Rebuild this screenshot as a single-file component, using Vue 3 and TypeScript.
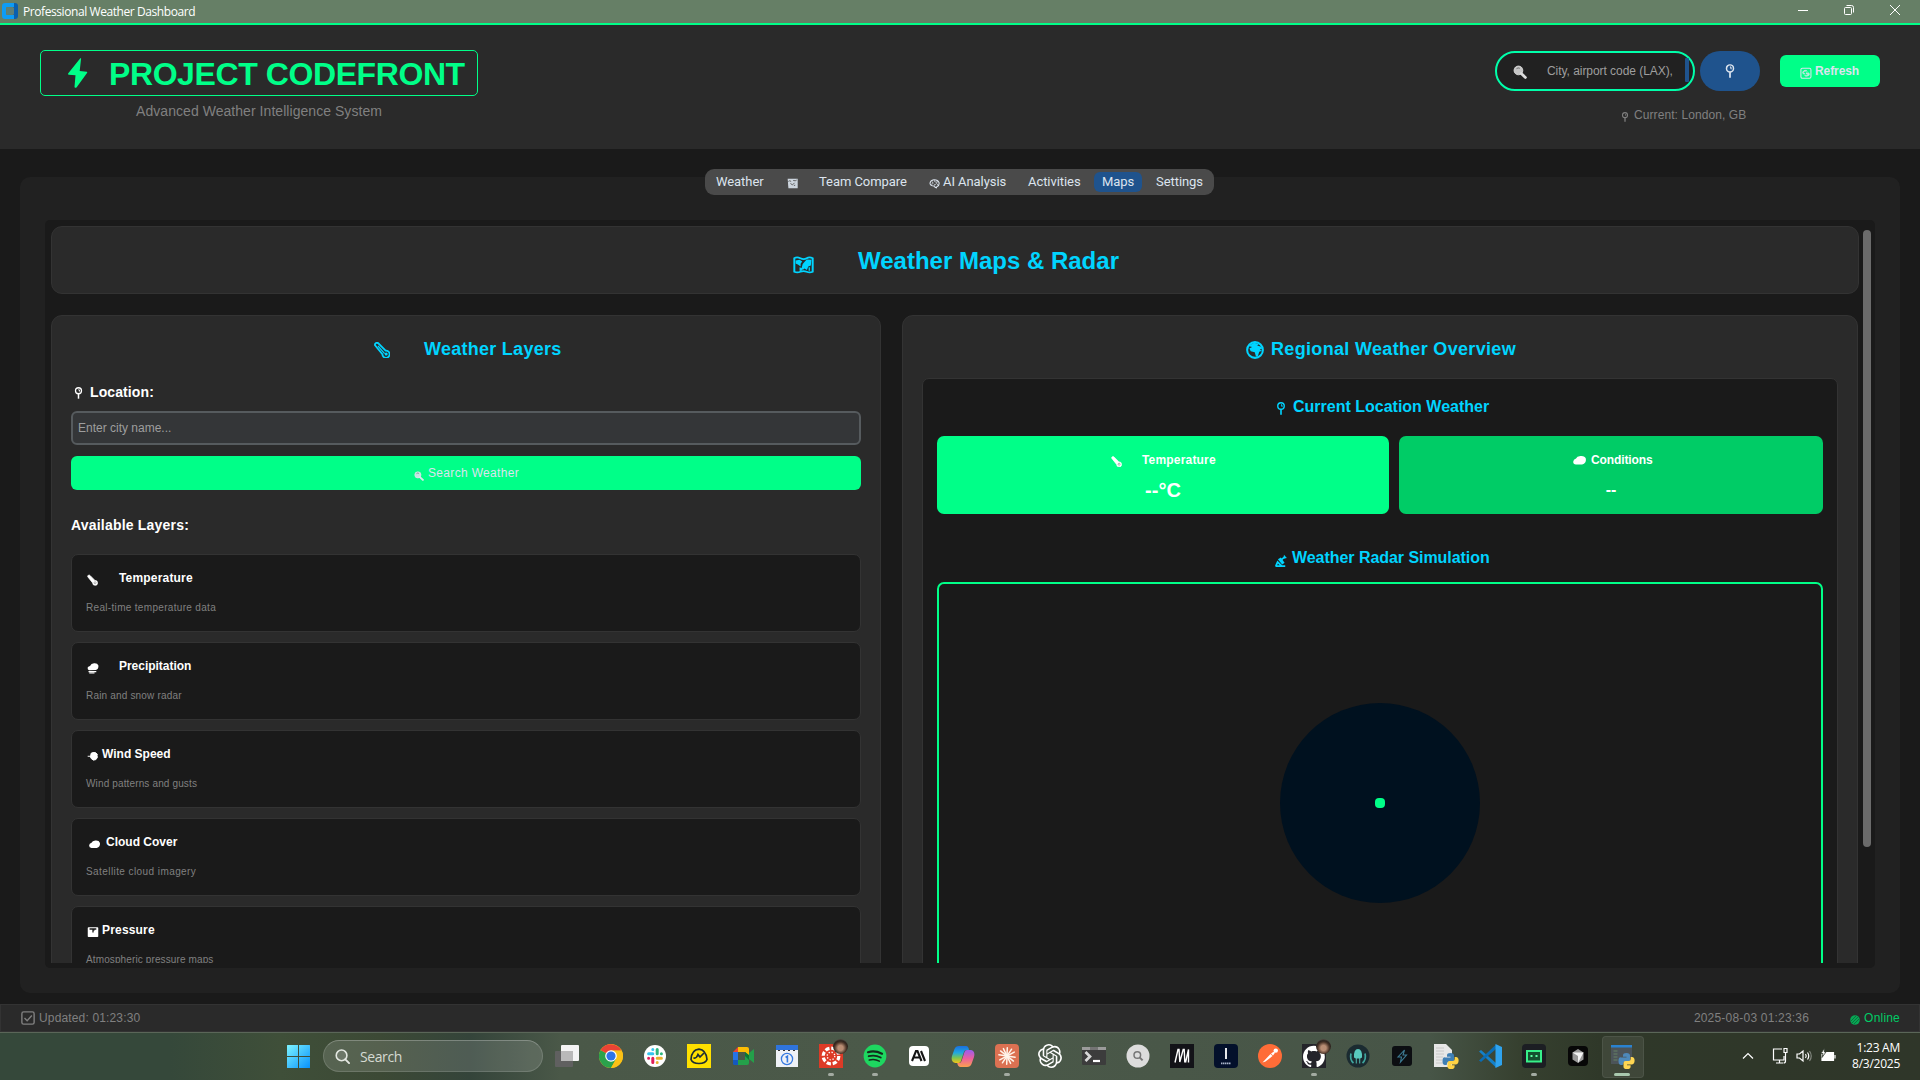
<script setup lang="ts">
interface Layer {
  name: string
  info: string
  icon: string
  w: number
  gap: number
  tracking: number
  infoTracking: number
}

interface TaskApp {
  name: string
  art: string
  running?: boolean
  badge?: boolean
  active?: boolean
}

const glyph: Record<string, string> = {
  pin: '<circle cx="8" cy="5" r="4" fill="none" stroke="currentColor" stroke-width="1.7"/><path d="M8 3.200A2 2 0 0 1 9 6" fill="none" stroke="currentColor" stroke-width="1.400"/><path d="M8 9v6.600" stroke="currentColor" stroke-width="2"/>',
  thermo: '<path d="M1 3.200A2 2 0 0 1 4.400 1.400l7.200 7.200a3.600 3.600 0 1 1-3.200 3.600z" fill="none" stroke="currentColor" stroke-width="1.800" stroke-linejoin="round"/><path d="M4 4l6.600 7.600" stroke="currentColor" stroke-width="1.200"/><circle cx="12.200" cy="12" r="1.500" fill="currentColor"/>',
  thermoSolid: '<path d="M1 3.200A2 2 0 0 1 4.400 1.400l7.200 7.200a3.600 3.600 0 1 1-3.400 3.600z" fill="currentColor" stroke="currentColor"/><circle cx="11.800" cy="12" r="1.500" fill="none" stroke="#0006"/>',
  map: '<path d="M1 2q2-1.400 4.600 0t4.800 0T15 2v12q-2.200 1.200-4.600 0t-4.800 0T1 14z" fill="none" stroke="currentColor" stroke-width="1.500"/><path d="M2 4l3-.600 2 1.400-1.200 2L5.800 9.400 4 7.800 2 6.600zM7.400 7l3-4 3.600.4-.4 5-2 1-1 3-1.800-1.400-1.400 1.400-.8-2zM5 10l2.400 1-1 2.400-1.400-.4z" fill="currentColor"/><path d="M12.400 10v3" stroke="currentColor"/>',
  globe: '<circle cx="8" cy="8" r="7" fill="none" stroke="currentColor" stroke-width="1.800"/><path d="M2 4.400L7.200 1.600l4 1L10 4l3.400 1.200.8 1.600-2 .8 2 1-2.400 1-1.400 4.200H8.800l-1-3.800-3.600-1L3 6.600l2.400-1.200z" fill="currentColor"/>',
  cloud: '<path d="M4 13.200Q.8 13 .8 10 1 7.200 4 6.400 5 3.800 9 3.400q5-.6 6.300 3.200.6 5.400-4.300 6.600z" fill="currentColor"/>',
  rain: '<path d="M3 11Q.6 10.600.8 7.800 1 5.600 4 5.200 5.400 2.400 9.400 1.800q4.600-.4 5.800 2.800.6 4.600-3.600 6.200z" fill="currentColor"/><path d="M2 12.800h10.400M3 14.600h7" stroke="currentColor" stroke-width="1.500"/>',
  wind: '<path d="M1 8.400h4M6 4l2.600-1 3.600 0L15 5.400l-.4 2.400.6 2-2.200 3.400-3.600.8L6.400 12 5 9.400z" fill="currentColor" stroke="currentColor" stroke-width="1.400"/>',
  gauge: '<rect x="1" y="1.500" width="14" height="13" rx="1" fill="currentColor"/><path d="M3.400 4h9M8 4v4.600M8 6l2-1" stroke="#1a1a1a" stroke-width="1.700" fill="none"/>',
  dish: '<path d="M3.600 6.400l3.600-2 4.600 6.400-3 2z" fill="currentColor"/><path d="M1 15l2.200-5 5.200 5M.6 15h12M8 7l4-3.400" stroke="currentColor" stroke-width="2.200" fill="none"/><path d="M11 1l3.600 4-4 .8z" fill="currentColor"/>',
  lens: '<circle cx="6.200" cy="6.200" r="5" fill="currentColor" fill-opacity=".88" stroke="currentColor"/><path d="M4 4.200a3.200 3.200 0 0 1 3.800-.4" stroke="#555" stroke-width=".9" fill="none"/><path d="M9.400 9.800l4.800 4.400" stroke="currentColor" stroke-width="3.200" stroke-linecap="round"/>',
  chart: '<path d="M1 1h14.500v14H2z" fill="currentColor" opacity=".9"/><path d="M2 5q2-2 4 0M9 3.600l3 .4 2-1M5 8l3 2 3-3M10 11l2-.6" stroke="#4a4a4a" stroke-width="1.200" fill="none"/>',
  brain: '<path d="M1.400 7.600Q2 3.400 7 2.600q6-.2 7.600 4.200.8 4.600-3.200 5.800l-.6 1.600-2-.6-.6-1.800Q1.800 11.600 1.400 7.600z" fill="none" stroke="currentColor" stroke-width="1.500"/><path d="M4 5.400q2.400.6 1.600 2.400T3.400 9M8 3.400q-.6 2 1.600 2.400t1 2.400-3 1.400M11 5l2.400 1M11.600 9.600l1.600-.8" fill="none" stroke="currentColor" stroke-width="1.200"/>',
  refresh: '<rect x="1.200" y="1.600" width="13.400" height="13.400" rx="2" fill="none" stroke="currentColor" stroke-width="1.400"/><path d="M3.600 7.400q1-3.400 4.600-3l1.600 1.400M12.400 9.200q-1 3.400-4.600 3l-2-1.400M4 6v3h3M12 11V8H8z" fill="currentColor" fill-opacity=".6" stroke="currentColor"/>',
  check: '<rect x="1" y="1" width="14" height="14" rx="2" fill="none" stroke="currentColor" stroke-width="1.600"/><path d="M4 8l3 3 5.400-5.800" fill="none" stroke="currentColor" stroke-width="1.600"/>',
}

const layers: Layer[] = [
  { name: 'Temperature', info: 'Real-time temperature data', icon: 'thermoSolid', w: 11, gap: 21, tracking: 0.18, infoTracking: 0.32 },
  { name: 'Precipitation', info: 'Rain and snow radar', icon: 'rain', w: 12, gap: 20, tracking: -0.03, infoTracking: 0.18 },
  { name: 'Wind Speed', info: 'Wind patterns and gusts', icon: 'wind', w: 11, gap: 4, tracking: 0, infoTracking: 0.14 },
  { name: 'Cloud Cover', info: 'Satellite cloud imagery', icon: 'cloud', w: 15, gap: 4, tracking: 0, infoTracking: 0.42 },
  { name: 'Pressure', info: 'Atmospheric pressure maps', icon: 'gauge', w: 12, gap: 3, tracking: 0.18, infoTracking: 0.12 },
]

const python =
  '<path d="M16.500 9q3.500 0 3.500 2.500V16q0 2-2 2h-3q-2.200 0-2.200 2.200V21H11q-2.500 0-2.500-4t2.500-3.600h5.500v-.7H13v-1.500Q13 9 16.500 9z" fill="#3f7fb5"/><path d="M17 25q-3.500 0-3.500-2.300V19q0-2 2-2h3.200q2 0 2-2v-2H22q2.600 0 2.600 3.600T22 20.600h-5v.7h3.600v1.400Q20.600 25 17 25z" fill="#ffd344"/>'

const apps: TaskApp[] = [
  { name: 'Task View', art: '<rect x="0" y="7" width="18" height="16" rx="1" fill="#606060"/><rect x="6" y="1" width="18" height="16" rx="1" fill="#f4f4f4"/><rect x="6" y="7" width="12" height="10" fill="#b9b9b9"/>' },
  { name: 'Chrome', art: '<circle cx="12" cy="12" r="12" fill="#fbc116"/><path d="M12 12L1.600 6A12 12 0 0 0 12 24l5-9z" fill="#2ba24c"/><path d="M12 12L1.600 6A12 12 0 0 1 22.400 6.500H12z" fill="#ea4335"/><path d="M12 12L17.200 15 12 24A12 12 0 0 0 22.800 6.700H12z" fill="#fbc116"/><circle cx="12" cy="12" r="5.800" fill="#fff"/><circle cx="12" cy="12" r="4.600" fill="#2f74e8"/>' },
  { name: 'Slack', art: '<circle cx="12" cy="12" r="11" fill="#fff"/><g stroke-width="3" stroke-linecap="round"><path d="M9.800 9.800H5.600M9.800 5.600h0" stroke="#36c5f0"/><path d="M14.200 9.800V5.600M18.400 9.800h0" stroke="#2eb67d"/><path d="M9.800 14.200v4.200M5.600 14.200h0" stroke="#e01e5a"/><path d="M14.200 14.200h4.200M14.200 18.400h0" stroke="#ecb22e"/></g>' },
  { name: 'Basecamp', art: '<rect width="24" height="24" fill="#ffe000"/><path d="M7 14q2.500.5 4-3.500l2 2.500 3.500-3.500" fill="none" stroke="#1d2d35" stroke-width="1.700" stroke-linecap="round"/><path d="M4 15.500Q4.500 6 12 5.200q7 .8 8 10.300-1.500 4-8 4t-8-4z" fill="none" stroke="#1d2d35" stroke-width="1.700"/>' },
  { name: 'Meet', art: '<path d="M2 8l5-5v5z" fill="#ea4335"/><path d="M7 3h9q2 0 2 2v7l-4-4H7z" fill="#fbbc04"/><path d="M2 8h5v8H2z" fill="#2673e8"/><path d="M2 16h5v5H3.500Q2 21 2 19.500z" fill="#1558c0"/><path d="M7 16h7v-4h4v7q0 2-2 2H7zM18 9l5-4v14l-5-4z" fill="#24a04a"/><path d="M14 8l4 3v5l-4-4z" fill="#0b7735"/>' },
  { name: 'Calendar', art: '<rect x="1" y="3" width="22" height="20" fill="#eef1f6"/><path d="M1 1h22v5H1z" fill="#2f74dc"/><path d="M3 6.500h18" stroke="#333" stroke-width="1" stroke-dasharray="2 3"/><circle cx="12" cy="15" r="5.600" fill="none" stroke="#367ae0" stroke-width="1.300"/><path d="M10.600 13.500l1.800-1.300V18.500" fill="none" stroke="#367ae0" stroke-width="1.600"/>' },
  { name: 'Canvas', art: '<rect width="24" height="24" fill="#dd3b27"/><circle cx="12" cy="12" r="7.800" fill="none" stroke="#fff" stroke-width="3.200" stroke-dasharray="4.300 1.830"/><circle cx="12" cy="12" r="3.800" fill="none" stroke="#fff" stroke-width="1.300" stroke-dasharray="1.300 1.700"/>', running: true, badge: true },
  { name: 'Spotify', art: '<circle cx="12" cy="12" r="11.400" fill="#1ed760"/><g fill="none" stroke="#142a1b" stroke-linecap="round"><path d="M5 8.200q7-2 14 1.500" stroke-width="2.200"/><path d="M5.700 12.200q6.300-1.700 12 1.300" stroke-width="1.900"/><path d="M6.300 16q5.400-1.400 10 1.100" stroke-width="1.600"/></g>', running: true },
  { name: 'Anthropic', art: '<rect x="2" y="2" width="20" height="20" rx="4" fill="#fff"/><path d="M5 17l4-10h1.500l4 10M6.500 13.500h6M14 7l4 10" fill="none" stroke="#151515" stroke-width="2.100"/>' },
  { name: 'Copilot', art: '<defs><linearGradient id="cpa" x1="0" y1="0" x2="0" y2="1"><stop offset="0" stop-color="#1a6fe0"/><stop offset=".4" stop-color="#20a8e0"/><stop offset=".7" stop-color="#7cc450"/><stop offset="1" stop-color="#f5c518"/></linearGradient><linearGradient id="cpb" x1="0" y1="0" x2="0" y2="1"><stop offset="0" stop-color="#9a5cf0"/><stop offset=".5" stop-color="#ec5f9e"/><stop offset="1" stop-color="#fba04e"/></linearGradient></defs><path d="M8 2h7q2.500 0 3 4h-2.500q-2 0-2.600 2L10 17q-.6 2-2.500 2H4.500Q-.5 18 1 12L3.500 5Q4.600 2 8 2z" fill="url(#cpa)"/><path d="M16 23H9.500Q7 23 6.200 19H8q2 0 2.600-2L13.500 8q.6-2 2.500-2h4Q24.500 7 23 13l-2.500 7q-1.100 3-4.500 3z" fill="url(#cpb)"/>' },
  { name: 'Claude', art: '<rect width="24" height="24" rx="4" fill="#dc7152"/><g stroke="#fff4ea" stroke-width="1.500" stroke-linecap="round">' + [8, 38, 64, 92, 124, 152].map((a) => `<path d="M3.800 12h16.400" transform="rotate(${a} 12 12)"/>`).join('') + '</g>', running: true },
  { name: 'ChatGPT', art: '<path fill="#fff" d="M22.2819 9.8211a5.9847 5.9847 0 0 0-.5157-4.9108 6.0462 6.0462 0 0 0-6.5098-2.9A6.0651 6.0651 0 0 0 4.9807 4.1818a5.9847 5.9847 0 0 0-3.9977 2.9 6.0462 6.0462 0 0 0 .7427 7.0966 5.98 5.98 0 0 0 .511 4.9107 6.051 6.051 0 0 0 6.5146 2.9001A5.9847 5.9847 0 0 0 13.2599 24a6.0557 6.0557 0 0 0 5.7718-4.2058 5.9894 5.9894 0 0 0 3.9977-2.9001 6.0557 6.0557 0 0 0-.7475-7.0729zm-9.022 12.6081a4.4755 4.4755 0 0 1-2.8764-1.0408l.1419-.0804 4.7783-2.7582a.7948.7948 0 0 0 .3927-.6813v-6.7369l2.02 1.1686a.071.071 0 0 1 .038.052v5.5826a4.504 4.504 0 0 1-4.4945 4.4944zm-9.6607-4.1254a4.4708 4.4708 0 0 1-.5346-3.0137l.142.0852 4.783 2.7582a.7712.7712 0 0 0 .7806 0l5.8428-3.3685v2.3324a.0804.0804 0 0 1-.0332.0615L9.74 19.9502a4.4992 4.4992 0 0 1-6.1408-1.6464zM2.3408 7.8956a4.485 4.485 0 0 1 2.3655-1.9728V11.6a.7664.7664 0 0 0 .3879.6765l5.8144 3.3543-2.0201 1.1685a.0757.0757 0 0 1-.071 0l-4.8303-2.7865A4.504 4.504 0 0 1 2.3408 7.872zm16.5963 3.8558L13.1038 8.364 15.1192 7.2a.0757.0757 0 0 1 .071 0l4.8303 2.7913a4.4944 4.4944 0 0 1-.6765 8.1042v-5.6772a.79.79 0 0 0-.407-.667zm2.0107-3.0231l-.142-.0852-4.7735-2.7818a.7759.7759 0 0 0-.7854 0L9.409 9.2297V6.8974a.0662.0662 0 0 1 .0284-.0615l4.8303-2.7866a4.4992 4.4992 0 0 1 6.6802 4.66zM8.3065 12.863l-2.02-1.1638a.0804.0804 0 0 1-.038-.0567V6.0742a4.4992 4.4992 0 0 1 7.3757-3.4537l-.142.0805L8.704 5.459a.7948.7948 0 0 0-.3927.6813zm1.0976-2.3654l2.602-1.4998 2.6069 1.4998v2.9994l-2.5974 1.4997-2.6067-1.4997Z"/>' },
  { name: 'Terminal', art: '<rect y="3" width="24" height="18" rx="1" fill="#3c3c3c"/><path d="M0 3h24v3H0z" fill="#9b9b9b"/><path d="M8 3h8v3H8z" fill="#747474"/><path d="M3.500 8l4.500 4.500L3.500 17" fill="none" stroke="#d8d8d8" stroke-width="2.700"/><path d="M11 17h7" stroke="#fff" stroke-width="2.200"/>' },
  { name: 'Finder', art: '<circle cx="12" cy="12" r="11.500" fill="#dcdcdc"/><circle cx="11.300" cy="11" r="3.300" fill="none" stroke="#777" stroke-width="1.500"/><path d="M13.600 13.400l3 3" stroke="#777" stroke-width="2"/>' },
  { name: 'Monitor', art: '<rect width="24" height="24" fill="#131318"/><path d="M5 18.500L8 5.500h1l.8 12.500L13.200 5.500h1L14.800 18.500M15.500 18.500L18.500 5.500V18.500" fill="none" stroke="#fff" stroke-width="1.400"/>' },
  { name: 'Ionos', art: '<rect width="24" height="24" rx="4" fill="#03102b"/><path d="M12 4v11" stroke="#fff" stroke-width="1.800"/><path d="M7 19.400h10" stroke="#a9b4ca" stroke-width="1.800" stroke-dasharray="1.500 .5"/>' },
  { name: 'Postman', art: '<circle cx="12" cy="12" r="12" fill="#ff6c37"/><path d="M4.500 18.500l8-8.500 2 2-7 5.500zM13 9.500l3-2 1 1.200-2 2.800z" fill="#fff"/><circle cx="17.800" cy="6.600" r="2.200" fill="#fff"/>' },
  { name: 'GitHub', art: '<rect width="24" height="24" fill="#24242a"/><path transform="translate(1 1.500) scale(.91)" d="M12 .297c-6.630 0-12 5.373-12 12 0 5.303 3.438 9.800 8.205 11.385.600.113.820-.258.820-.577 0-.285-.010-1.040-.015-2.040-3.338.724-4.042-1.610-4.042-1.610C4.422 18.070 3.633 17.700 3.633 17.700c-1.087-.744.084-.729.084-.729 1.205.084 1.838 1.236 1.838 1.236 1.070 1.835 2.809 1.305 3.495.998.108-.776.417-1.305.760-1.605-2.665-.300-5.466-1.332-5.466-5.930 0-1.310.465-2.380 1.235-3.220-.135-.303-.540-1.523.105-3.176 0 0 1.005-.322 3.300 1.230.960-.267 1.980-.399 3-.405 1.020.006 2.040.138 3 .405 2.280-1.552 3.285-1.230 3.285-1.230.645 1.653.240 2.873.120 3.176.765.840 1.230 1.910 1.230 3.220 0 4.610-2.805 5.625-5.475 5.920.420.360.810 1.096.810 2.220 0 1.606-.015 2.896-.015 3.286 0 .315.210.690.825.570C20.565 22.092 24 17.592 24 12.297c0-6.627-5.373-12-12-12" fill="#fff"/>', running: true, badge: true },
  { name: 'GitKraken', art: '<circle cx="12" cy="12" r="11.500" fill="#1b2b31"/><path d="M8 13.500Q7.500 5 12 5t4 8.500l-1.800 1v5h-.9v-5h-2.600v5h-.9v-5z" fill="#58c9be"/><path d="M7.500 19Q3.500 15.500 5 9.500M16.500 19q4-3.500 2.500-9.500" fill="none" stroke="#3fa59e" stroke-width="1.700"/>' },
  { name: 'Bolt', art: '<rect x="2" y="2" width="20" height="20" rx="3" fill="#0c0e12"/><path d="M14.500 6L8 13h3.500l-1 5 6-7H13z" fill="none" stroke="#3d7b94" stroke-width="1.100"/>' },
  { name: 'Python Script', art: '<path d="M0 0h12l6 6v17H0z" fill="#e7e7e7"/><path d="M2 4h8M2 7h8M2 10h8M2 13h7M2 16h6M2 19h7" stroke="#c2c2c2" stroke-width=".8"/>' + python },
  { name: 'VS Code', art: '<path d="M1 7.500L3 6l15 13v4.500z" fill="#1480c8"/><path d="M1 16.500L3 18 18 5V.5z" fill="#0a6cb4"/><path d="M17.500 0L24 3v18l-6.500 3z" fill="#2fa3ee"/>' },
  { name: 'Recorder', art: '<rect x="0" y="0" width="24" height="24" rx="4" fill="#1c1e23"/><path d="M5 7h14v10.500H5z" fill="#14502f" stroke="#37f08a" stroke-width="2"/><path d="M8.500 12h2M13.500 12h2" stroke="#5cffa4" stroke-width="2"/>', running: true },
  { name: 'Cursor', art: '<rect x="2" y="2" width="20" height="20" rx="4" fill="#070707"/><path d="M6.500 8.500L12 5l5.500 3.500v7L12 19l-5.500-3.500z" fill="#9a9a9a"/><path d="M6.500 8.500h11L12 19v-7z" fill="#f4f4f4"/>' },
  { name: 'Weather Dashboard', art: '<rect x="1" y="1" width="21" height="19" fill="#3d464b"/><path d="M1 1h21v2.500H1z" fill="#1878cc"/><path d="M3.500 7h4M3.500 10h4M3.500 13h4M3.500 16h4" stroke="#62855c" stroke-width=".8"/>' + python, active: true },
]
</script>

<template>
  <div class="screen">
    <div class="titlebar">
      <svg class="appicon" viewBox="0 0 16 16"><path d="M11 0h2q3 0 3 3v10q0 3-3 3h-2z" fill="#0a5fae" /><path d="M3 0h9v4H5q-1 0-1 1v6q0 1 1 1h7v4H3q-3 0-3-3V3q0-3 3-3z" fill="#0d9cf5" /><path d="M4.500 4.500H12v7H4.500z" fill="#5d8079" /></svg>
      <span class="wintitle">Professional Weather Dashboard</span>
      <div class="wincontrols">
        <svg viewBox="0 0 12 12"><path d="M1 6.500h10" /></svg>
        <svg viewBox="0 0 12 12"><rect x="1.500" y="3.500" width="7" height="7" rx="1" /><path d="M3.500 1.500h5q2 0 2 2v5" /></svg>
        <svg viewBox="0 0 12 12"><path d="M1 1l10 10M11 1L1 11" /></svg>
      </div>
    </div>

    <header class="header">
      <div class="brand">
        <div class="logo">
          <svg class="bolt" viewBox="0 0 20 30"><path d="M12.300.3Q13.500-.3 13 1.300L11.700 13l7 .7q1 .3.300 1.300L8.500 29.500q-2 1-2-.7l1-11.500-6.700-.6q-1.200-.4-.5-1.400z" fill="currentColor" /></svg>
          <span>PROJECT CODEFRONT</span>
        </div>
        <div class="tagline">Advanced Weather Intelligence System</div>
      </div>
      <div class="tools">
        <div class="toolrow">
          <div class="search">
            <svg class="lens" viewBox="0 0 16 16" v-html="glyph.lens" />
            <span>City, airport code (LAX),</span>
            <i />
          </div>
          <button class="locate"><svg viewBox="0 0 16 16" v-html="glyph.pin" /></button>
          <button class="refresh"><svg viewBox="0 0 16 16" v-html="glyph.refresh" />Refresh</button>
        </div>
        <div class="current"><svg viewBox="0 0 16 16" v-html="glyph.pin" />Current: London, GB</div>
      </div>
    </header>

    <main class="main">
      <nav class="tabs">
        <span class="tab t1">Weather</span>
        <span class="tab t2"><svg viewBox="0 0 16 16" v-html="glyph.chart" />Team Compare</span>
        <span class="tab t3"><svg viewBox="0 0 16 16" v-html="glyph.brain" />AI Analysis</span>
        <span class="tab t4">Activities</span>
        <span class="tab on">Maps</span>
        <span class="tab t6">Settings</span>
      </nav>
      <section class="panel">
        <div class="scroller">
          <div class="view">
            <div class="card heading">
              <svg viewBox="0 0 16 16" preserveAspectRatio="none" v-html="glyph.map" />
              <h1>Weather Maps &amp; Radar</h1>
            </div>
            <div class="columns">
              <div class="card left">
                <div class="subhead lh"><svg viewBox="0 0 16 16" v-html="glyph.thermo" /><h2>Weather Layers</h2></div>
                <div class="label"><svg viewBox="0 0 16 16" v-html="glyph.pin" />Location:</div>
                <div class="field">Enter city name...</div>
                <button class="go"><svg viewBox="0 0 16 16" v-html="glyph.lens" />Search Weather</button>
                <div class="label avail">Available Layers:</div>
                <div v-for="l in layers" :key="l.name" class="layer">
                  <div class="lname" :style="{ letterSpacing: l.tracking + 'px' }">
                    <svg viewBox="0 0 16 16" :style="{ width: l.w + 'px', marginRight: l.gap + 'px' }" v-html="glyph[l.icon]" />{{ l.name }}
                  </div>
                  <div class="linfo" :style="{ letterSpacing: l.infoTracking + 'px' }">{{ l.info }}</div>
                </div>
              </div>
              <div class="card right">
                <div class="subhead rh"><svg viewBox="0 0 16 16" v-html="glyph.globe" /><h2>Regional Weather Overview</h2></div>
                <div class="inner">
                  <div class="h3 loc"><svg viewBox="0 0 16 16" v-html="glyph.pin" /><h3>Current Location Weather</h3></div>
                  <div class="stats">
                    <div class="stat temp">
                      <div class="sname"><svg viewBox="0 0 16 16" v-html="glyph.thermoSolid" />Temperature</div>
                      <div class="sval">--°C</div>
                    </div>
                    <div class="stat cond">
                      <div class="sname"><svg viewBox="0 0 16 16" v-html="glyph.cloud" />Conditions</div>
                      <div class="sval small">--</div>
                    </div>
                  </div>
                  <div class="h3 rad"><svg viewBox="0 0 16 16" v-html="glyph.dish" /><h3>Weather Radar Simulation</h3></div>
                  <div class="radar"><div class="disc"><i /></div></div>
                </div>
              </div>
            </div>
          </div>
          <div class="track"><i /></div>
        </div>
      </section>
    </main>

    <footer class="status">
      <span class="upd"><svg viewBox="0 0 16 16" v-html="glyph.check" />Updated: 01:23:30</span>
      <span class="date">2025-08-03 01:23:36</span>
      <span class="online"><svg viewBox="0 0 10 10"><circle cx="5" cy="5" r="4.800" fill="#07a654" /><path d="M1 6l5-5M2 8l6-6M4 9l5-5" stroke="#0a6337" stroke-width=".8" /></svg>Online</span>
    </footer>

    <div class="taskbar">
      <svg class="start" viewBox="0 0 23 23">
        <defs><linearGradient id="win" x1="0" y1="0" x2="1" y2="1"><stop offset="0" stop-color="#7df3ff" /><stop offset="1" stop-color="#0791fb" /></linearGradient></defs>
        <path d="M0 .5Q0 0 .5 0H11v11H0zM12 0h10.500q.5 0 .5.500V11H12zM0 12h11v11H.5q-.5 0-.5-.5zM12 12h11v10.500q0 .5-.5.500H12z" fill="url(#win)" />
      </svg>
      <div class="find">
        <svg viewBox="0 0 16 16"><circle cx="7" cy="6.800" r="5.700" fill="#ffffff22" stroke="#e4e8e2" stroke-width="1.700" /><path d="M11 11l4 4" stroke="#e4e8e2" stroke-width="2" stroke-linecap="round" /></svg>
        <span>Search</span>
      </div>
      <div class="apps">
        <div v-for="a in apps" :key="a.name" class="app" :class="{ active: a.active, running: a.running }">
          <svg viewBox="0 0 24 24" :class="{ py: a.name === 'Python Script' || a.active }" v-html="a.art" />
          <b v-if="a.badge" />
        </div>
      </div>
      <div class="tray">
        <svg class="up" viewBox="0 0 12 8"><path d="M1 6.500l5-5 5 5" /></svg>
        <svg class="net" viewBox="0 0 16 18"><path d="M10 2H1.500v11H12V9M4 16h7M7.500 13v3M12 1.500h3v4h-3zM13.500 6v8q0 2-2 2" /></svg>
        <svg class="vol" viewBox="0 0 16 16"><path d="M1 6h2.500l3.500-3v10l-3.500-3H1zM9.500 6q1.500 2 0 4M11.500 4.500q2.500 3.500 0 7" /><path d="M13.500 3q3.500 5 0 10" opacity=".4" /></svg>
        <svg class="bat" viewBox="0 0 16 16"><path d="M2 4.500h11.500v8H2z" fill="#fff" /><path d="M15 7v3.500" /><path d="M4.500 0L1 5.500h2l-1 4 4-5.500H4.300z" fill="#fff" stroke="#30392c" stroke-width=".8" /></svg>
        <div class="clock"><span>1:23 AM</span><span>8/3/2025</span></div>
      </div>
    </div>
  </div>
</template>

<style>
body {
  margin: 0;
  background: #1a1a1a;
  overflow: hidden;
}
</style>

<style scoped>
* {
  box-sizing: border-box;
}
.screen {
  width: 1920px;
  height: 1080px;
  overflow: hidden;
  display: flex;
  flex-direction: column;
  background: #1a1a1a;
  color: #fff;
  font-family: "Liberation Sans", Arial, sans-serif;
  font-size: 12px;
  white-space: nowrap;
}
svg {
  display: block;
  flex: none;
}
h1,
h2,
h3 {
  margin: 0;
  font-weight: bold;
}
button {
  border: 0;
  padding: 0;
  font-family: inherit;
  font-size: 12px;
  color: #dce4ee;
}

.titlebar {
  height: 25px;
  flex: none;
  display: flex;
  align-items: flex-start;
  background: #667f66;
  border-bottom: 2px solid #00ff88;
  padding-left: 2px;
}
.appicon {
  width: 16px;
  height: 16px;
  margin-top: 3px;
}
.wintitle {
  font-family: "Open Sans", "Noto Sans", sans-serif;
  font-size: 12px;
  line-height: 23px;
  letter-spacing: -0.42px;
  margin-left: 5px;
}
.wincontrols {
  margin-left: auto;
  margin-right: 19px;
  margin-top: 4px;
  display: flex;
  gap: 34px;
}
.wincontrols svg {
  width: 12px;
  height: 12px;
  fill: none;
  stroke: #fff;
  stroke-width: 1;
}

.header {
  height: 124px;
  flex: none;
  background: #2a2a2a;
  display: flex;
  justify-content: space-between;
  padding: 25px 40px 0;
}
.brand {
  width: 438px;
}
.logo {
  height: 46px;
  border: 1px solid #00ff88;
  border-radius: 5px;
  display: flex;
  align-items: center;
  padding-left: 27px;
  color: #00ff88;
  font-size: 32px;
  font-weight: bold;
  line-height: 44px;
  letter-spacing: -0.41px;
}
.logo span {
  padding-top: 1px;
}
.bolt {
  width: 20px;
  height: 30px;
  margin-right: 21px;
}
.tagline {
  text-align: center;
  font-size: 14px;
  line-height: 30px;
  color: #808080;
  letter-spacing: 0.05px;
}
.tools {
  width: 385px;
  padding-top: 1px;
}
.toolrow {
  display: flex;
  align-items: center;
  height: 40px;
}
.search {
  width: 200px;
  height: 40px;
  border: 2px solid #00ffaa;
  border-radius: 20px;
  background: #212121;
  display: flex;
  align-items: center;
  padding-left: 16px;
  color: #9e9e9e;
  letter-spacing: -0.05px;
}
.search .lens {
  width: 14px;
  height: 14px;
  margin: 2px 20px 0 0;
  color: #dcdcdc;
}
.search i {
  width: 4px;
  height: 24px;
  background: #1f538d;
  margin: -2px 4px 0 auto;
  border-radius: 1px;
}
.locate {
  width: 60px;
  height: 40px;
  border-radius: 20px;
  background: #1f538d;
  margin-left: 5px;
  display: flex;
  align-items: center;
  justify-content: center;
}
.locate svg {
  width: 14px;
  height: 14px;
}
.refresh {
  width: 100px;
  height: 32px;
  border-radius: 6px;
  background: #00ff88;
  margin-left: 20px;
  display: flex;
  align-items: center;
  padding-left: 20px;
  font-weight: bold;
  letter-spacing: -0.08px;
}
.refresh svg {
  width: 12px;
  height: 12px;
  margin: 4px 3px 0 0;
}
.current {
  display: flex;
  align-items: center;
  padding-left: 124px;
  height: 20px;
  margin-top: 14px;
  color: #808080;
  letter-spacing: 0.08px;
}
.current svg {
  width: 12px;
  height: 10px;
  margin: 3px 3px 0 0;
}

.main {
  height: 855px;
  flex: none;
  padding: 20px 20px 0;
  display: flex;
  flex-direction: column;
}
.tabs {
  width: 509px;
  height: 26px;
  flex: none;
  margin: 0 0 -18px 685px;
  background: #4a4a4a;
  border-radius: 9px;
  z-index: 1;
  display: flex;
  align-items: center;
  font-family: Roboto, sans-serif;
  font-size: 13px;
  letter-spacing: -0.06px;
  color: #dce4ee;
}
.tab {
  display: flex;
  align-items: center;
  height: 20px;
  padding-bottom: 2px;
}
.tab svg {
  margin-top: 5px;
}
.t1 {
  width: 82px;
  padding-left: 11px;
}
.t2 {
  width: 142px;
}
.t2 svg {
  width: 11px;
  height: 11px;
  margin-right: 21px;
}
.t3 {
  width: 99px;
}
.t3 svg {
  width: 11px;
  height: 11px;
  margin-right: 3px;
}
.t4 {
  width: 66px;
}
.tab.on {
  width: 48px;
  justify-content: center;
  background: #1f538d;
  border-radius: 6px;
}
.t6 {
  padding-left: 14px;
}
.panel {
  height: 816px;
  flex: none;
  background: #212121;
  border-radius: 10px;
  padding: 43px 25px 25px;
}
.scroller {
  height: 748px;
  background: #1a1a1a;
  border-radius: 5px;
  padding: 6px 4px 5px 6px;
  display: flex;
}
.view {
  width: 1808px;
  height: 737px;
  overflow: hidden;
}
.track {
  padding: 4px 0 0 4px;
}
.track i {
  display: block;
  width: 8px;
  height: 617px;
  border-radius: 4px;
  background: #6b6b6b;
}
.card {
  background: #2a2a2a;
  border: 1px solid #333;
  border-radius: 11px;
}
.heading {
  height: 68px;
  display: flex;
  align-items: center;
  padding-left: 741px;
  color: #00d4ff;
}
.heading svg {
  width: 21px;
  height: 18px;
  margin: 9px 44px 0 0;
}
.heading h1 {
  font-size: 24px;
  padding-top: 2px;
}
.columns {
  display: flex;
  gap: 21px;
  margin-top: 21px;
}
.left {
  width: 830px;
  height: 760px;
  padding: 18px 19px;
}
.right {
  width: 956px;
  height: 760px;
  padding: 18px 19px;
}
.subhead {
  display: flex;
  align-items: center;
  height: 30px;
  color: #00d4ff;
}
.subhead h2 {
  font-size: 18px;
}
.lh {
  padding-left: 303px;
}
.lh svg {
  width: 16px;
  height: 16px;
  margin: 2px 34px 0 0;
}
.lh h2 {
  letter-spacing: 0.27px;
}
.rh {
  padding-left: 324px;
}
.rh svg {
  width: 18px;
  height: 18px;
  margin: 2px 7px 0 0;
}
.rh h2 {
  letter-spacing: 0.33px;
}
.label {
  display: flex;
  align-items: center;
  height: 20px;
  margin-top: 18px;
  font-size: 14px;
  font-weight: bold;
  letter-spacing: 0.1px;
}
.label svg {
  width: 13px;
  height: 12px;
  margin: 1px 5px 0 1px;
}
.field {
  height: 34px;
  margin-top: 9px;
  border: 2px solid #565b5e;
  border-radius: 6px;
  background: #343638;
  line-height: 30px;
  padding-left: 5px;
  color: #9e9e9e;
}
.go {
  width: 100%;
  height: 34px;
  margin-top: 11px;
  border-radius: 6px;
  background: #00ff88;
  display: flex;
  align-items: center;
  padding-left: 343px;
  letter-spacing: 0.33px;
}
.go svg {
  width: 10px;
  height: 10px;
  margin: 5px 4px 0 0;
}
.avail {
  margin-top: 25px;
  margin-bottom: 19px;
  letter-spacing: 0.2px;
}
.layer {
  height: 78px;
  border: 1px solid #333;
  border-radius: 7px;
  background: #1a1a1a;
  margin-bottom: 10px;
  padding: 13px 14px;
}
.lname {
  display: flex;
  align-items: center;
  height: 20px;
  font-weight: bold;
  padding-left: 1px;
}
.lname svg {
  height: 12px;
  margin-top: 3px;
}
.linfo {
  font-size: 10px;
  line-height: 20px;
  margin-top: 10px;
  color: #808080;
}
.inner {
  height: 700px;
  margin-top: 14px;
  border: 1px solid #333;
  border-radius: 7px;
  background: #1a1a1a;
  padding: 18px 14px;
}
.h3 {
  display: flex;
  align-items: center;
  height: 20px;
  color: #00d4ff;
}
.h3 h3 {
  font-size: 16px;
}
.loc {
  padding-left: 337px;
}
.loc svg {
  width: 14px;
  height: 13px;
  margin: 3px 5px 0 0;
}
.rad {
  padding-left: 338px;
  margin-top: 34px;
}
.rad svg {
  width: 13px;
  height: 13px;
  margin: 5px 4px 0 0;
}
.rad h3 {
  letter-spacing: -0.05px;
}
.stats {
  display: flex;
  gap: 10px;
  margin-top: 19px;
}
.stat {
  height: 78px;
  border-radius: 7px;
  padding-top: 14px;
}
.temp {
  width: 452px;
  background: #00ff88;
}
.cond {
  width: 424px;
  background: #00cc66;
}
.sname {
  height: 20px;
  display: flex;
  align-items: center;
  font-weight: bold;
  letter-spacing: 0.18px;
}
.temp .sname {
  padding-left: 174px;
}
.temp .sname svg {
  width: 11px;
  height: 11px;
  margin: 3px 20px 0 0;
}
.cond .sname {
  padding-left: 173px;
  letter-spacing: -0.12px;
}
.cond .sname svg {
  width: 15px;
  height: 14px;
  margin: 0 4px 0 0;
}
.sval {
  font-size: 20px;
  font-weight: bold;
  line-height: 24px;
  margin-top: 8px;
  text-align: center;
}
.sval.small {
  font-size: 16px;
}
.radar {
  height: 446px;
  margin-top: 14px;
  border: 2px solid #00ff88;
  border-radius: 7px;
  display: flex;
  justify-content: center;
  padding-top: 119px;
}
.disc {
  width: 200px;
  height: 200px;
  border-radius: 50%;
  background: #00111f;
  display: flex;
  align-items: center;
  justify-content: center;
}
.disc i {
  width: 10px;
  height: 10px;
  border-radius: 4px;
  background: #00ff88;
}

.status {
  height: 28px;
  flex: none;
  background: #2a2a2a;
  border: 1px solid #333;
  display: flex;
  align-items: center;
  padding: 0 19px 0 20px;
  color: #808080;
  letter-spacing: 0.15px;
}
.upd,
.online {
  display: flex;
  align-items: center;
}
.upd svg {
  width: 14px;
  height: 14px;
  margin: 0 4px 0 0;
}
.date {
  margin-left: auto;
  letter-spacing: 0.2px;
}
.online {
  color: #00cc66;
  margin-left: 41px;
  letter-spacing: 0.2px;
}
.online svg {
  width: 10px;
  height: 10px;
  margin: 4px 4px 0 0;
}

.taskbar {
  height: 48px;
  flex: none;
  border-top: 1px solid #5a6658;
  background: linear-gradient(90deg, #35483a 0, #35483a 170px, #3f4f39 280px, #3c4935 380px, #34443a 470px, #4a5848 560px, #4b5949 900px, #475547 1430px, #36402f 1520px, #2f3829 1600px, #2f3629 100%);
  display: flex;
  align-items: center;
  padding-left: 287px;
  padding-bottom: 1px;
}
.start {
  width: 23px;
  height: 23px;
}
.find {
  width: 220px;
  height: 32px;
  margin: 0 0 0 13px;
  border-radius: 16px;
  background: #ffffff22;
  border: 1px solid #ffffff22;
  border-top-color: #ffffff40;
  display: flex;
  align-items: center;
  padding-left: 11px;
  font-family: "Open Sans", "Noto Sans", sans-serif;
  font-size: 14px;
  letter-spacing: -0.4px;
  color: #d5dad3;
}
.find svg {
  width: 15px;
  height: 15px;
  margin-right: 10px;
}
.apps {
  display: flex;
  margin-left: 2px;
}
.app {
  width: 43.96px;
  height: 46px;
  display: flex;
  align-items: center;
  justify-content: center;
  position: relative;
}
.app svg {
  width: 24px;
  height: 24px;
}
.app svg.py {
  overflow: visible;
}
.app b {
  position: absolute;
  right: 5px;
  top: 6px;
  width: 15px;
  height: 15px;
  border-radius: 50%;
  background: radial-gradient(circle at 50% 60%, #b98d74 0 22%, #4a3428 50%, #2c241e 62%, #8f8a80 100%);
}
.app.running::after,
.app.active::after {
  content: "";
  position: absolute;
  left: 19px;
  bottom: 3px;
  width: 6px;
  height: 3px;
  border-radius: 2px;
  background: #a3aba2;
}
.app.active::after {
  left: 14px;
  width: 16px;
  background: #a9c8ae;
}
.app.active::before {
  content: "";
  position: absolute;
  left: 2px;
  top: 3px;
  width: 40px;
  height: 40px;
  border-radius: 4px;
  background: #ffffff14;
  border: 1px solid #ffffff12;
}
.tray {
  margin-left: auto;
  display: flex;
  align-items: center;
  padding-right: 20px;
}
.tray svg {
  fill: none;
  stroke: #fff;
  stroke-width: 1.2;
}
.up {
  width: 12px;
  height: 8px;
  margin-right: 18px;
}
.net {
  width: 16px;
  height: 18px;
  margin-right: 8px;
}
.vol {
  width: 16px;
  height: 16px;
  margin-right: 8px;
}
.bat {
  width: 16px;
  height: 16px;
}
.clock {
  width: 64px;
  display: flex;
  flex-direction: column;
  align-items: flex-end;
  font-family: "Open Sans", "Noto Sans", sans-serif;
  font-size: 12px;
  line-height: 16px;
  letter-spacing: -0.25px;
}
</style>
